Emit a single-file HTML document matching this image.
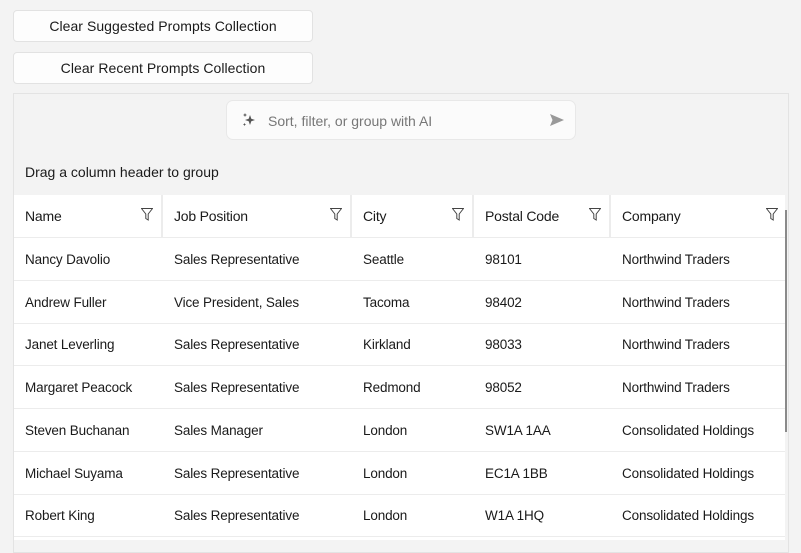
<!DOCTYPE html>
<html><head><style>
*{box-sizing:border-box;margin:0;padding:0}
body{width:801px;height:549px;background:#f3f3f3;font-family:"Liberation Sans",sans-serif;font-size:13px;color:#1a1a1a;position:relative;overflow:hidden}
.btn{position:absolute;left:13px;width:300px;height:32px;background:#fdfdfd;border:1px solid #e2e2e2;border-radius:4px;text-align:center;line-height:31px;font-size:14px;letter-spacing:0.05px}
.panel{position:absolute;left:13px;top:93px;width:776px;height:460px;border:1px solid #e3e3e3;background:#f3f3f3}
.search{position:absolute;left:226px;top:100px;width:350px;height:40px;background:#fbfbfb;border:1px solid #e8e8e8;border-radius:7px}
.search span{position:absolute;left:41px;top:12px;color:#777;font-size:14px}
.drag{position:absolute;left:25px;top:164px;font-size:14px}
.grid{position:absolute;left:14px;top:195px;width:771px;height:345px;background:#fff}
.row{position:absolute;left:0;width:771px;height:43px;border-bottom:1px solid #ececec}
.c{position:absolute;top:0;line-height:43px;white-space:nowrap;font-size:13.5px;letter-spacing:-0.15px}
.hd .c{font-size:14px;letter-spacing:-0.2px}
.sep{position:absolute;top:0;width:2px;height:42px;background:#ececec}
.f{position:absolute;top:13px}
.sb{position:absolute;left:785px;top:210px;width:2px;height:222px;background:#8a8a8a}
</style></head><body>
<div class="btn" style="top:10px">Clear Suggested Prompts Collection</div>
<div class="btn" style="top:52px">Clear Recent Prompts Collection</div>
<div class="panel"></div>
<div class="search">
<svg style="position:absolute;left:14px;top:11px" width="16" height="16" viewBox="0 0 16 16" fill="#555"><path d="M9 3 L10.3 6.7 L14 8 L10.3 9.3 L9 13 L7.7 9.3 L4 8 L7.7 6.7Z"/><path d="M4 1 L4.6 2.4 L6 3 L4.6 3.6 L4 5 L3.4 3.6 L2 3 L3.4 2.4Z"/><path d="M3.5 11 L4 12 L5 12.5 L4 13 L3.5 14 L3 13 L2 12.5 L3 12Z"/></svg>
<span>Sort, filter, or group with AI</span>
<svg style="position:absolute;left:322px;top:12px" width="16" height="14" viewBox="0 0 16 14" fill="#999"><path d="M1 1 L15 7 L1 13 L3.5 7Z"/></svg>
</div>
<div class="drag">Drag a column header to group</div>
<div class="grid">
<div class="row hd" style="top:0">
<div class="c" style="left:11px">Name</div><div class="sep" style="left:147px"></div>
<div class="c" style="left:160px">Job Position</div><div class="sep" style="left:336px"></div>
<div class="c" style="left:349px">City</div><div class="sep" style="left:458px"></div>
<div class="c" style="left:471px">Postal Code</div><div class="sep" style="left:595px"></div>
<div class="c" style="left:608px">Company</div>
</div>
</div>
<div class="sb"></div>
<script>
var F='<svg width="12" height="13" viewBox="0 0 12 13" fill="none" stroke="#444" stroke-width="1"><path d="M0.5 0.5 H11.5 L7.2 6 V12 L4.8 10.5 V6Z"/></svg>';
var g=document.querySelector('.grid');
[127,316,438,575,752].forEach(function(x){var d=document.createElement('div');d.className='f';d.style.left=x+'px';d.style.top='13px';d.innerHTML=F;g.appendChild(d);});
var rows=[["Nancy Davolio","Sales Representative","Seattle","98101","Northwind Traders"],["Andrew Fuller","Vice President, Sales","Tacoma","98402","Northwind Traders"],["Janet Leverling","Sales Representative","Kirkland","98033","Northwind Traders"],["Margaret Peacock","Sales Representative","Redmond","98052","Northwind Traders"],["Steven Buchanan","Sales Manager","London","SW1A 1AA","Consolidated Holdings"],["Michael Suyama","Sales Representative","London","EC1A 1BB","Consolidated Holdings"],["Robert King","Sales Representative","London","W1A 1HQ","Consolidated Holdings"]];
var xs=[11,160,349,471,608];
rows.forEach(function(r,i){var d=document.createElement('div');d.className='row';d.style.top=(43+i*42.7)+'px';var h='';r.forEach(function(t,j){h+='<div class="c" style="left:'+xs[j]+'px">'+t+'</div>';});d.innerHTML=h;g.appendChild(d);});
</script>
</body></html>
